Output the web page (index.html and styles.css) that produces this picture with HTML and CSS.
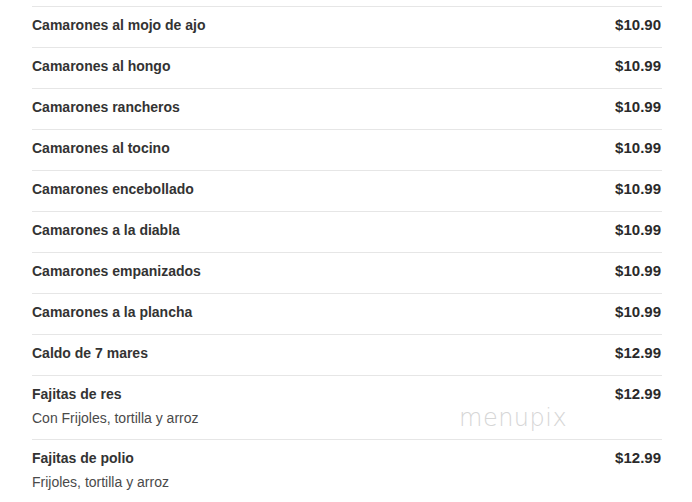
FILE: index.html
```html
<!DOCTYPE html>
<html lang="es">
<head>
<meta charset="utf-8">
<link rel="stylesheet" href="styles.css">
</head>
<body>
<ul class="menu">
  <li class="item"><div class="info"><div class="name">Camarones al mojo de ajo</div></div><div class="price">$10.90</div></li>
  <li class="item"><div class="info"><div class="name">Camarones al hongo</div></div><div class="price">$10.99</div></li>
  <li class="item"><div class="info"><div class="name">Camarones rancheros</div></div><div class="price">$10.99</div></li>
  <li class="item"><div class="info"><div class="name">Camarones al tocino</div></div><div class="price">$10.99</div></li>
  <li class="item"><div class="info"><div class="name">Camarones encebollado</div></div><div class="price">$10.99</div></li>
  <li class="item"><div class="info"><div class="name">Camarones a la diabla</div></div><div class="price">$10.99</div></li>
  <li class="item"><div class="info"><div class="name">Camarones empanizados</div></div><div class="price">$10.99</div></li>
  <li class="item"><div class="info"><div class="name">Camarones a la plancha</div></div><div class="price">$10.99</div></li>
  <li class="item"><div class="info"><div class="name">Caldo de 7 mares</div></div><div class="price">$12.99</div></li>
  <li class="item item-wm"><div class="info"><div class="name">Fajitas de res</div><div class="desc">Con Frijoles, tortilla y arroz</div></div><div class="price">$12.99</div><span class="watermark">menupix</span></li>
  <li class="item"><div class="info"><div class="name">Fajitas de polio</div><div class="desc">Frijoles, tortilla y arroz</div></div><div class="price">$12.99</div></li>
</ul>
</body>
</html>
```

FILE: styles.css
```css
html, body {
  margin: 0;
  padding: 0;
  background: #ffffff;
}

body {
  font-family: "Liberation Sans", Arial, sans-serif;
  font-size: 14px;
  color: #333333;
}

.menu {
  list-style: none;
  margin: 6px 0 0 32px;
  padding: 0;
  width: 630px;
}

.item {
  display: flex;
  justify-content: space-between;
  align-items: flex-start;
  border-top: 1px solid #e6e6e6;
  padding: 8px 0 12px;
}

.item-wm {
  position: relative;
}

.name {
  font-weight: bold;
  line-height: 20px;
  color: #333333;
}

.desc {
  margin-top: 5px;
  line-height: 18px;
  color: #4a4a4a;
}

.price {
  font-weight: bold;
  font-size: 15px;
  line-height: 20px;
  color: #2a2a2a;
  padding-right: 1px;
}

.watermark {
  position: absolute;
  left: 427px;
  top: 29px;
  font-family: "DejaVu Sans", sans-serif;
  font-weight: 200;
  font-size: 24px;
  letter-spacing: 0.5px;
  color: #d6d6d6;
  line-height: 26px;
}
```
